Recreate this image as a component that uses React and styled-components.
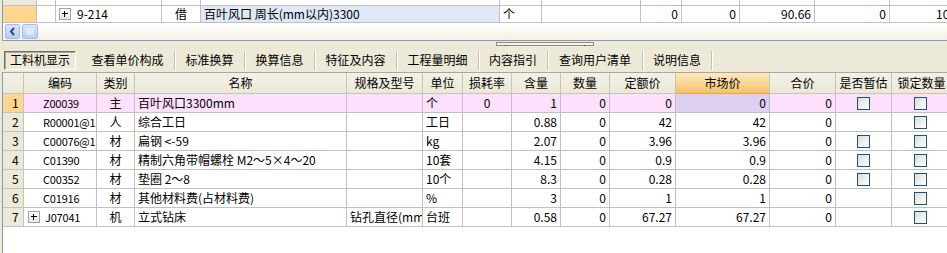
import styled, { createGlobalStyle } from 'styled-components'

const GlobalStyle = createGlobalStyle`
    html, body {
        margin: 0;
        padding: 0;
        background: #ece9d8;
    }
    body {
        font-family: "Noto Sans CJK SC", "DejaVu Sans", sans-serif;
        font-size: 12px;
        color: #000;
    }
`

// column widths of the lower grid
const COLS = [21, 73, 38, 212, 76, 40, 49, 49, 49, 66, 94, 66, 56, 60]
const GRID_COLS = COLS.map((w) => `${w}px`).join(' ')

// column widths of the upper (clipped) grid
const TOP_COLS = [37, 19, 106, 39, 299, 42, 99, 41, 58, 75, 75, 70]
const TOP_GRID = TOP_COLS.map((w) => `${w}px`).join(' ')

const Page = styled('div')`
    width: 947px;
    height: 253px;
    overflow: hidden;
    display: flex;
    flex-direction: column;
    background: #ece9d8;
`

const TopPane = styled('div')`
    margin-left: 2px;
    height: 40px;
    flex-shrink: 0;
    background: #fff;
    border-left: 1px solid #7f9db9;
    border-bottom: 1px solid #7f9db9;
    display: flex;
    flex-direction: column;
    overflow: hidden;
`

const TopRow = styled('div')`
    display: grid;
    grid-template-columns: ${TOP_GRID};
    height: ${(p) => p.$h}px;
    flex-shrink: 0;
    margin-left: -3px;
`

const TopCell = styled('div')`
    border-right: 1px solid #c0c0c0;
    border-bottom: 1px solid #c0c0c0;
    background: ${(p) => p.$bg || '#fff'};
    display: flex;
    align-items: center;
    gap: 6px;
    justify-content: ${(p) =>
        p.$align === 'right' ? 'flex-end' : p.$align === 'center' ? 'center' : 'flex-start'};
    padding: 0 3px;
    white-space: nowrap;
    overflow: hidden;
    line-height: 16px;
`

const HScroll = styled('div')`
    flex: 1;
    display: flex;
    align-items: center;
    gap: 2px;
    padding-left: 2px;
    background: linear-gradient(#ffffff, #f3f1e6);
`

const ScrollBtn = styled('div')`
    width: 13px;
    height: 13px;
    border: 1px solid #a5bbe6;
    border-radius: 2px;
    background: linear-gradient(#d9e5fd, #b8cdf7);
    display: flex;
    align-items: center;
    justify-content: center;
`

const Thumb = styled(ScrollBtn)`
    width: 14px;
`

const Splitter = styled('div')`
    height: 6px;
    flex-shrink: 0;
    display: flex;
    padding-left: 496px;
    padding-top: 1px;
`

const Grip = styled('div')`
    width: 98px;
    height: 4px;
    border: 1px solid #8e8c80;
    background: #f3f1e8;
    display: flex;
    justify-content: space-between;
    padding: 0 8px;
    box-sizing: border-box;
    &::before,
    &::after {
        content: '';
        width: 1px;
        height: 1px;
        margin-top: 2px;
        background: #333;
    }
`

const TabBar = styled('div')`
    height: 24px;
    flex-shrink: 0;
    display: flex;
    align-items: center;
    padding-left: 4px;
`

const Tab = styled('div')`
    width: ${(p) => p.$w}px;
    height: 19px;
    display: flex;
    align-items: center;
    justify-content: center;
    line-height: 14px;
    white-space: nowrap;
    box-sizing: border-box;
    border-right: 1px solid #c5c2b2;
    box-shadow: 1px 0 0 #fff;
    ${(p) =>
        p.$active &&
        `
        border: 1px solid;
        border-color: #716f64 #fff #fff #716f64;
        box-shadow: inset 1px 1px 0 #aca899;
        margin-right: 5px;
    `}
`

const Grid = styled('div')`
    flex: 1;
    margin-left: 2px;
    background: #fff;
    border-left: 1px solid #7f9db9;
    border-top: 1px solid #aca899;
    overflow: hidden;
`

const Row = styled('div')`
    display: grid;
    grid-template-columns: ${GRID_COLS};
    height: ${(p) => (p.$head ? 21 : 19)}px;
`

const HeadCell = styled('div')`
    background: ${(p) =>
        p.$hot
            ? 'linear-gradient(#fde9c0, #f4c268)'
            : 'linear-gradient(#f3f1e8, #ebe8d8)'};
    border-right: 1px solid #c8c5b5;
    border-bottom: 1px solid ${(p) => (p.$hot ? '#e8a93c' : '#c8c5b5')};
    display: flex;
    align-items: center;
    justify-content: center;
    white-space: nowrap;
    overflow: hidden;
    line-height: 16px;
`

const Cell = styled('div')`
    border-right: 1px solid #c0c0c0;
    border-bottom: 1px solid #c0c0c0;
    background: ${(p) => p.$bg || 'transparent'};
    display: flex;
    align-items: center;
    gap: 5px;
    justify-content: ${(p) =>
        p.$align === 'right' ? 'flex-end' : p.$align === 'center' ? 'center' : 'flex-start'};
    padding: 0 3px;
    white-space: nowrap;
    overflow: hidden;
    line-height: 16px;
`

const CodeCell = styled(Cell)`
    padding-left: ${(p) => (p.$plus ? 4 : 19)}px;
    padding-right: 0;
    font-size: 11px;
    letter-spacing: -0.2px;
`

const CheckCell = styled(Cell)`
    padding-left: ${(p) => p.$pad}px;
`

const NumCell = styled(Cell)`
    background: ${(p) => (p.$sel ? '#ffd68f' : '#ece9d8')};
    border-color: #c8c5b5;
    padding-left: 9px;
`

const Plus = styled('span')`
    position: relative;
    width: 10px;
    height: 10px;
    flex-shrink: 0;
    border: 1px solid #a2a2a2;
    background: linear-gradient(#ffffff, #e6e6e6);
    &::before,
    &::after {
        content: '';
        position: absolute;
        background: #000;
    }
    &::before {
        left: 2px;
        top: 4px;
        width: 6px;
        height: 1px;
    }
    &::after {
        left: 4px;
        top: 2px;
        width: 1px;
        height: 6px;
    }
`

const Check = styled('span')`
    width: 11px;
    height: 11px;
    flex-shrink: 0;
    border: 1px solid #1c5180;
    background: linear-gradient(135deg, #dcdcd6, #ffffff);
`

const TABS = [
    ['工料机显示', 72, true],
    ['查看单价构成', 94],
    ['标准换算', 70],
    ['换算信息', 70],
    ['特征及内容', 82],
    ['工程量明细', 82],
    ['内容指引', 69],
    ['查询用户清单', 95],
    ['说明信息', 69],
]

const HEADS = ['', '编码', '类别', '名称', '规格及型号', '单位', '损耗率', '含量', '数量', '定额价', '市场价', '合价', '是否暂估', '锁定数量']

const ROWS = [
    { code: 'Z00039', type: '主', name: '百叶风口3300mm', spec: '', unit: '个', loss: '0', qty: '1', amt: '0', quota: '0', market: '0', total: '0', est: true },
    { code: 'R00001@1', type: '人', name: '综合工日', spec: '', unit: '工日', qty: '0.88', amt: '0', quota: '42', market: '42', total: '0', est: false },
    { code: 'C00076@1', type: '材', name: '扁钢 <-59', spec: '', unit: 'kg', qty: '2.07', amt: '0', quota: '3.96', market: '3.96', total: '0', est: true },
    { code: 'C01390', type: '材', name: '精制六角带帽螺栓 M2～5×4～20', spec: '', unit: '10套', qty: '4.15', amt: '0', quota: '0.9', market: '0.9', total: '0', est: true },
    { code: 'C00352', type: '材', name: '垫圈 2～8', spec: '', unit: '10个', qty: '8.3', amt: '0', quota: '0.28', market: '0.28', total: '0', est: true },
    { code: 'C01916', type: '材', name: '其他材料费(占材料费)', spec: '', unit: '%', qty: '3', amt: '0', quota: '1', market: '1', total: '0', est: false },
    { code: 'J07041', type: '机', name: '立式钻床', spec: '钻孔直径(mm', unit: '台班', qty: '0.58', amt: '0', quota: '67.27', market: '67.27', total: '0', est: false, plus: true },
]

const App = () => {
    return (
        <Page>
            <GlobalStyle />
            <TopPane>
                <TopRow $h={6}>
                    {TOP_COLS.map((_, i) => (
                        <TopCell key={i} $bg={i === 0 ? '#ece9d8' : null} />
                    ))}
                </TopRow>
                <TopRow $h={17}>
                    <TopCell $bg="#ffd68f" />
                    <TopCell />
                    <TopCell>
                        <Plus />
                        9-214
                    </TopCell>
                    <TopCell $align="center">借</TopCell>
                    <TopCell $bg="#dfe8f6">百叶风口 周长(mm以内)3300</TopCell>
                    <TopCell>个</TopCell>
                    <TopCell />
                    <TopCell $align="right">0</TopCell>
                    <TopCell $align="right">0</TopCell>
                    <TopCell $align="right">90.66</TopCell>
                    <TopCell $align="right">0</TopCell>
                    <TopCell $align="right">106</TopCell>
                </TopRow>
                <HScroll>
                    <ScrollBtn>
                        <svg width="7" height="9" viewBox="0 0 7 9">
                            <path d="M5 1 L2 4.5 L5 8" fill="none" stroke="#2b4a86" strokeWidth="2" />
                        </svg>
                    </ScrollBtn>
                    <Thumb>
                        <svg width="8" height="7" viewBox="0 0 8 7">
                            <path d="M1 0V7M3 0V7M5 0V7M7 0V7" stroke="#f2f6ff" strokeWidth="1" />
                        </svg>
                    </Thumb>
                </HScroll>
            </TopPane>
            <Splitter>
                <Grip />
            </Splitter>
            <TabBar>
                {TABS.map(([label, w, active]) => (
                    <Tab key={label} $w={w} $active={active}>
                        {label}
                    </Tab>
                ))}
            </TabBar>
            <Grid>
                <Row $head>
                    {HEADS.map((h, i) => (
                        <HeadCell key={i} $hot={h === '市场价'}>
                            {h}
                        </HeadCell>
                    ))}
                </Row>
                {ROWS.map((r, i) => {
                    const bg = i === 0 ? '#fde0fd' : null
                    return (
                        <Row key={r.code}>
                            <NumCell $sel={i === 0}>{i + 1}</NumCell>
                            <CodeCell $bg={bg} $plus={r.plus}>
                                {r.plus && <Plus />}
                                {r.code}
                            </CodeCell>
                            <Cell $bg={bg} $align="center">{r.type}</Cell>
                            <Cell $bg={bg}>{r.name}</Cell>
                            <Cell $bg={bg}>{r.spec}</Cell>
                            <Cell $bg={bg}>{r.unit}</Cell>
                            <Cell $bg={bg} $align="center">{r.loss}</Cell>
                            <Cell $bg={bg} $align="right">{r.qty}</Cell>
                            <Cell $bg={bg} $align="right">{r.amt}</Cell>
                            <Cell $bg={bg} $align="right">{r.quota}</Cell>
                            <Cell $bg={i === 0 ? '#ddd0f2' : null} $align="right">{r.market}</Cell>
                            <Cell $bg={bg} $align="right">{r.total}</Cell>
                            <CheckCell $bg={bg} $pad={21}>{r.est && <Check />}</CheckCell>
                            <CheckCell $bg={bg} $pad={22}>
                                <Check />
                            </CheckCell>
                        </Row>
                    )
                })}
            </Grid>
        </Page>
    )
}

export default App
